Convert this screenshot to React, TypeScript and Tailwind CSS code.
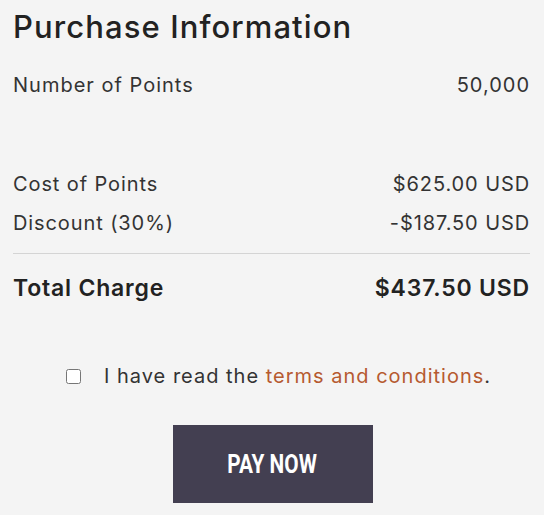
export default function App() {
  return (
    <div className="min-h-[515px] w-[544px] bg-[#f4f4f4] text-[#222] px-[13px] pt-[7px] pr-[14px]" style={{ fontFamily: 'Inter, Lato, sans-serif' }}>
      <h1 className="text-[31px] leading-[40px] font-medium tracking-[1.1px]">Purchase Information</h1>
      <div className="mt-[22px] flex justify-between text-[20px] leading-[32px] text-[#333] tracking-[1px]">
        <span>Number of Points</span>
        <span>50,000</span>
      </div>
      <div className="mt-[63px] flex flex-col text-[20px] text-[#333] tracking-[0.9px]">
        <div className="flex justify-between h-[39px] items-center">
          <span>Cost of Points</span>
          <span>$625.00 USD</span>
        </div>
        <div className="flex justify-between h-[39px] items-center">
          <span>Discount (30%)</span>
          <span>-$187.50 USD</span>
        </div>
      </div>
      <div className="mt-[11px] border-t border-[#d4d4d4]" />
      <div className="flex justify-between h-[68px] items-center text-[23px] font-semibold text-[#222] tracking-[0.8px]">
        <span>Total Charge</span>
        <span>$437.50 USD</span>
      </div>
      <div className="mt-[39px] flex items-center pl-[53px] text-[20px] text-[#333] tracking-[1px]">
        <input type="checkbox" className="w-[15px] h-[15px] rounded-[3px] border border-[#aaa]" />
        <span className="ml-[23px]">
          I have read the <a className="text-[#b65a30]">terms and conditions</a>.
        </span>
      </div>
      <div className="mt-[34px] flex justify-center pl-[2px]">
        <button className="w-[200px] h-[78px] bg-[#433f51] text-white text-[26px] font-bold" style={{ fontFamily: 'Roboto, sans-serif' }}>
          <span className="inline-block scale-x-[0.8]">PAY NOW</span>
        </button>
      </div>
    </div>
  );
}
